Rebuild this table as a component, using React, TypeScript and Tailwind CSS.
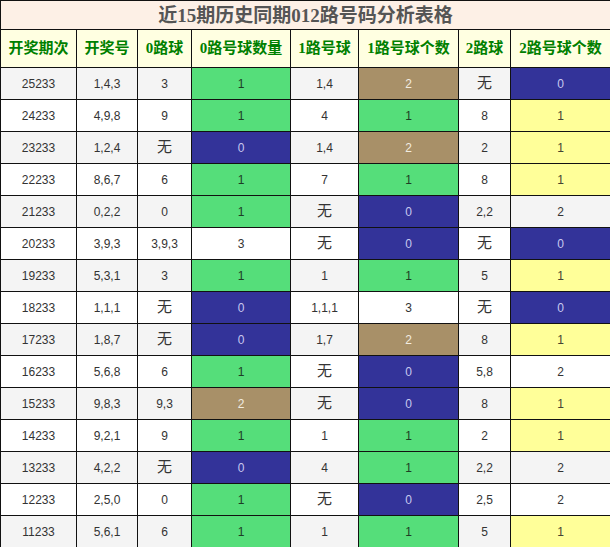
import React from "react";

type Cell = string | { v: string; c: "g" | "t" | "n" | "y" };

const headers = ["开奖期次", "开奖号", "0路球", "0路号球数量", "1路号球", "1路号球个数", "2路球", "2路号球个数"];
const widths = ["w-[76px]", "w-[61px]", "w-[54px]", "w-[99px]", "w-[68px]", "w-[100px]", "w-[52px]", "w-[100px]"];

const g = (v: string): Cell => ({ v, c: "g" });
const t = (v: string): Cell => ({ v, c: "t" });
const n = (v: string): Cell => ({ v, c: "n" });
const y = (v: string): Cell => ({ v, c: "y" });

const rows: Cell[][] = [
  ["25233", "1,4,3", "3", g("1"), "1,4", t("2"), "无", n("0")],
  ["24233", "4,9,8", "9", g("1"), "4", g("1"), "8", y("1")],
  ["23233", "1,2,4", "无", n("0"), "1,4", t("2"), "2", y("1")],
  ["22233", "8,6,7", "6", g("1"), "7", g("1"), "8", y("1")],
  ["21233", "0,2,2", "0", g("1"), "无", n("0"), "2,2", "2"],
  ["20233", "3,9,3", "3,9,3", "3", "无", n("0"), "无", n("0")],
  ["19233", "5,3,1", "3", g("1"), "1", g("1"), "5", y("1")],
  ["18233", "1,1,1", "无", n("0"), "1,1,1", "3", "无", n("0")],
  ["17233", "1,8,7", "无", n("0"), "1,7", t("2"), "8", y("1")],
  ["16233", "5,6,8", "6", g("1"), "无", n("0"), "5,8", "2"],
  ["15233", "9,8,3", "9,3", t("2"), "无", n("0"), "8", y("1")],
  ["14233", "9,2,1", "9", g("1"), "1", g("1"), "2", y("1")],
  ["13233", "4,2,2", "无", n("0"), "4", g("1"), "2,2", "2"],
  ["12233", "2,5,0", "0", g("1"), "无", n("0"), "2,5", "2"],
  ["11233", "5,6,1", "6", g("1"), "1", g("1"), "5", y("1")],
];

const colorClass = {
  g: "bg-[#55de7a] text-[#1d3d25]",
  t: "bg-[#a89068] text-[#f2ece0]",
  n: "bg-[#333399] text-[#c8c8f0]",
  y: "bg-[#ffff99] text-[#444433]",
};

export default function App() {
  return (
    <div className="w-[610px] h-[547px] bg-white">
      <table className="w-[610px] table-fixed border-collapse border border-[#111]">
        <colgroup>
          {widths.map((w, i) => (
            <col key={i} className={w} />
          ))}
        </colgroup>
        <thead>
          <tr className="h-[29px]">
            <th
              colSpan={8}
              className="border border-[#111] bg-[#fdf0e6] text-center text-[19px] font-bold leading-none text-[#555] font-['Liberation_Serif','Noto_Sans_CJK_SC',serif]"
            >
              近15期历史同期012路号码分析表格
            </th>
          </tr>
          <tr className="h-[38px]">
            {headers.map((h) => (
              <th
                key={h}
                className="border border-[#111] bg-[#ffffe1] p-0 text-center text-[15px] font-bold text-[#008000] font-['Liberation_Serif','Noto_Sans_CJK_SC',serif]"
              >
                {h}
              </th>
            ))}
          </tr>
        </thead>
        <tbody>
          {rows.map((r, i) => (
            <tr key={i} className={i % 2 === 0 ? "h-[32px] bg-[#f4f4f4]" : "h-[32px] bg-white"}>
              {r.map((c, j) => {
                const val = typeof c === "string" ? c : c.v;
                const cls = typeof c === "string" ? "text-[#333]" : colorClass[c.c];
                const wu = val === "无";
                return (
                  <td
                    key={j}
                    className={`border border-[#111] p-0 text-center font-['Liberation_Sans','Noto_Sans_CJK_SC',sans-serif] ${cls} ${wu ? "text-[15px] text-[#222]" : "text-[12px]"}`}
                  >
                    {val}
                  </td>
                );
              })}
            </tr>
          ))}
        </tbody>
      </table>
    </div>
  );
}
